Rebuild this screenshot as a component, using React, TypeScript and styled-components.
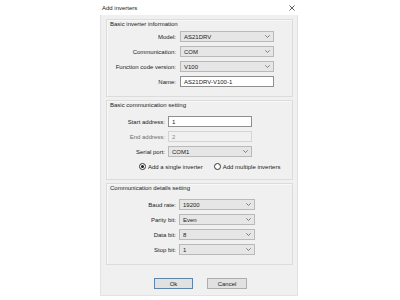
import React from 'react';
import styled, { createGlobalStyle } from 'styled-components';

const GlobalStyle = createGlobalStyle`
    *, *::before, *::after {
        box-sizing: border-box;
    }
    html, body {
        margin: 0;
        padding: 0;
        background: #fff;
    }
    body {
        font-family: 'Liberation Sans', Arial, sans-serif;
        font-size: 6px;
        color: #1b1b1b;
    }
`;

const Window = styled.div`
    margin-left: 100px;
    width: 198px;
    height: 296px;
    display: flex;
    flex-direction: column;
`;

const TitleBar = styled.div`
    height: 15px;
    display: flex;
    align-items: center;
    justify-content: space-between;
    padding: 0 3px 0 2px;
    background: #fff;
`;

const Body = styled.div`
    flex: 1;
    background: #f0f0f0;
    border: 1px solid #e2e2e2;
    border-top: none;
    padding: 4px 4px 0 5px;
    display: flex;
    flex-direction: column;
    gap: 3px;
`;

const Group = styled.div<{ h: number }>`
    height: ${p => p.h}px;
    border: 1px solid #dcdcdc;
    box-shadow: inset 1px 1px 0 #f8f8f8;
    display: flex;
    flex-direction: column;
`;

const Legend = styled.div`
    margin: 1px 0 0 3px;
    height: 7px;
    line-height: 7px;
    white-space: nowrap;
`;

const Form = styled.div<{ labelW: number; ctrlW: number; gap: number; top: number }>`
    margin-top: ${p => p.top}px;
    display: grid;
    grid-template-columns: ${p => p.labelW}px ${p => p.ctrlW}px;
    column-gap: ${p => p.gap}px;
    row-gap: 4px;
    grid-auto-rows: 11px;
    align-items: center;
`;

const Label = styled.span<{ dim?: boolean }>`
    text-align: right;
    white-space: nowrap;
    color: ${p => (p.dim ? '#6d6d6d' : '#1b1b1b')};
`;

const Combo = styled.div`
    height: 11px;
    display: flex;
    align-items: center;
    justify-content: space-between;
    padding: 0 3px 0 3px;
    background: #e6e6e6;
    border: 1px solid #b9b9b9;
`;

const TextBox = styled.div<{ disabled?: boolean }>`
    height: 11px;
    display: flex;
    align-items: center;
    padding: 0 3px;
    background: ${p => (p.disabled ? '#f0f0f0' : '#fff')};
    border: 1px solid ${p => (p.disabled ? '#d4d4d4' : '#8f8f8f')};
    color: ${p => (p.disabled ? '#8a8a8a' : '#1b1b1b')};
`;

const RadioRow = styled.div`
    margin-top: 4px;
    height: 11px;
    display: flex;
    align-items: center;
    gap: 11px;
    padding-left: 32px;
`;

const RadioItem = styled.label`
    display: flex;
    align-items: center;
    gap: 2px;
    white-space: nowrap;
`;

const RadioCircle = styled.span<{ checked?: boolean }>`
    width: 7px;
    height: 7px;
    border-radius: 50%;
    border: 1px solid #333;
    background: #fff;
    display: flex;
    align-items: center;
    justify-content: center;
    &::after {
        content: '';
        width: 3px;
        height: 3px;
        border-radius: 50%;
        background: ${p => (p.checked ? '#1b1b1b' : 'transparent')};
    }
`;

const ButtonRow = styled.div`
    margin-top: 10px;
    display: flex;
    gap: 14px;
    padding-left: 48px;
`;

const Button = styled.button<{ primary?: boolean; w: number }>`
    width: ${p => p.w}px;
    height: 11px;
    padding: 0;
    font: inherit;
    color: #1b1b1b;
    background: #e1e1e1;
    border: 1px solid ${p => (p.primary ? '#3c8fd6' : '#adadad')};
`;

const Chevron = () => (
    <svg width="5" height="3" viewBox="0 0 5 3">
        <polyline points="0.3,0.3 2.5,2.5 4.7,0.3" fill="none" stroke="#666" strokeWidth="0.8" />
    </svg>
);

const CloseIcon = () => (
    <svg width="6" height="6" viewBox="0 0 6 6">
        <path d="M0.5 0.5 L5.5 5.5 M5.5 0.5 L0.5 5.5" stroke="#333" strokeWidth="0.8" />
    </svg>
);

const Select = ({ value }: { value: string }) => (
    <Combo>
        <span>{value}</span>
        <Chevron />
    </Combo>
);

export default function App() {
    return (
        <>
            <GlobalStyle />
            <Window>
                <TitleBar>
                    <span>Add inverters</span>
                    <CloseIcon />
                </TitleBar>
                <Body>
                    <Group h={78}>
                        <Legend>Basic inverter information</Legend>
                        <Form labelW={69} ctrlW={94} gap={4} top={3}>
                            <Label>Model:</Label>
                            <Select value="AS21DRV" />
                            <Label>Communication:</Label>
                            <Select value="COM" />
                            <Label>Function code version:</Label>
                            <Select value="V100" />
                            <Label>Name:</Label>
                            <TextBox>AS21DRV-V100-1</TextBox>
                        </Form>
                    </Group>
                    <Group h={80}>
                        <Legend>Basic communication setting</Legend>
                        <Form labelW={58} ctrlW={84} gap={3} top={7}>
                            <Label>Start address:</Label>
                            <TextBox>1</TextBox>
                            <Label dim>End address:</Label>
                            <TextBox disabled>2</TextBox>
                            <Label>Serial port:</Label>
                            <Select value="COM1" />
                        </Form>
                        <RadioRow>
                            <RadioItem>
                                <RadioCircle checked />
                                Add a single inverter
                            </RadioItem>
                            <RadioItem>
                                <RadioCircle />
                                Add multiple inverters
                            </RadioItem>
                        </RadioRow>
                    </Group>
                    <Group h={82}>
                        <Legend>Communication details setting</Legend>
                        <Form labelW={69} ctrlW={76} gap={3} top={7}>
                            <Label>Baud rate:</Label>
                            <Select value="19200" />
                            <Label>Parity bit:</Label>
                            <Select value="Even" />
                            <Label>Data bit:</Label>
                            <Select value="8" />
                            <Label>Stop bit:</Label>
                            <Select value="1" />
                        </Form>
                    </Group>
                    <ButtonRow>
                        <Button primary w={39}>Ok</Button>
                        <Button w={40}>Cancel</Button>
                    </ButtonRow>
                </Body>
            </Window>
        </>
    );
}
